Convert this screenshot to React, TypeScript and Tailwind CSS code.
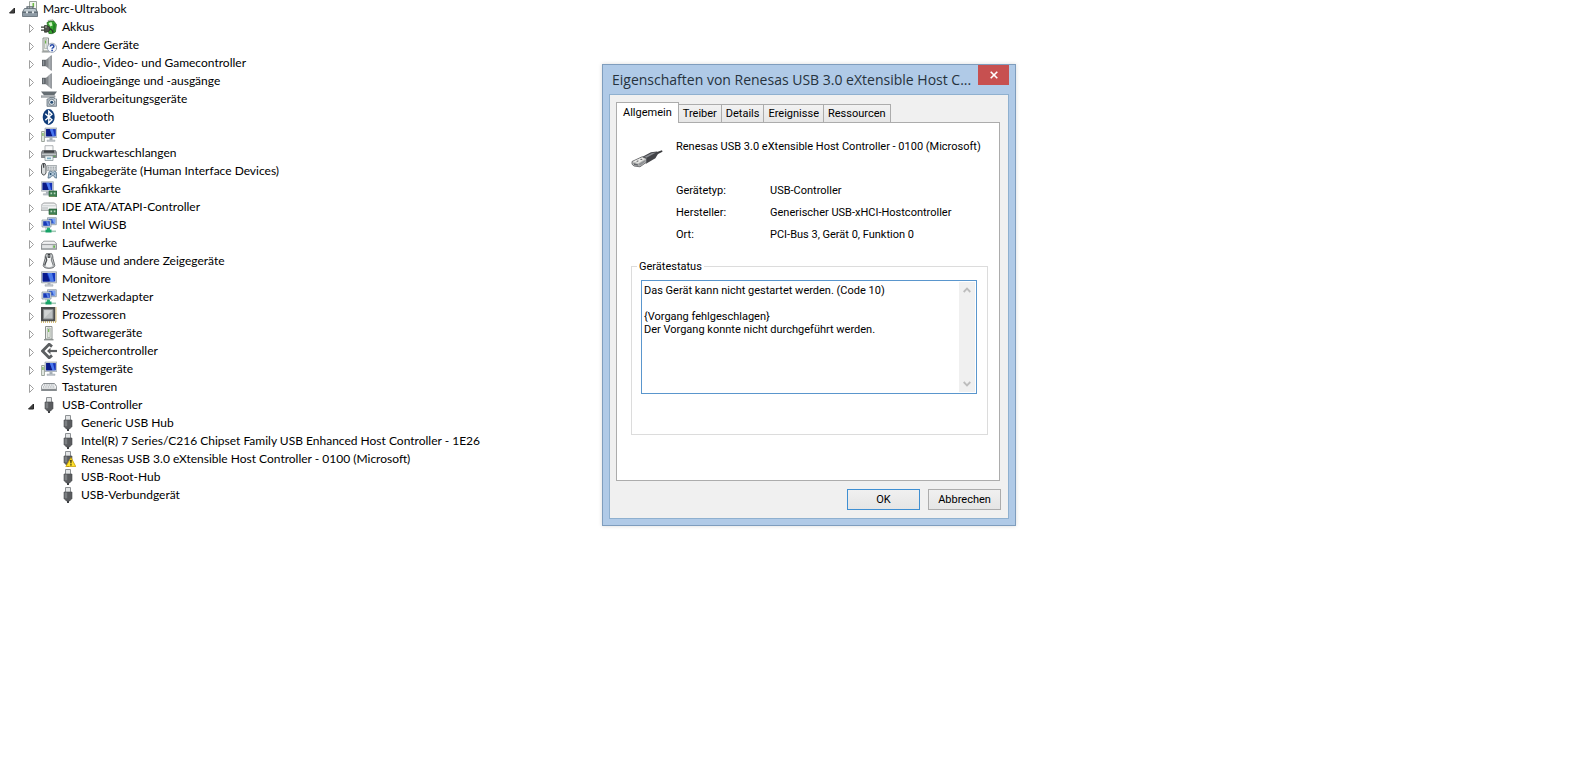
import { useState, type ReactNode } from "react";

type IconName =
  | "toolbox" | "battery" | "unknown" | "speaker" | "camera" | "bluetooth"
  | "computer" | "printer" | "hid" | "graphics" | "ide" | "network" | "drive"
  | "mouse" | "monitor" | "cpu" | "software" | "storage" | "keyboard" | "usb" | "usbWarning";

const screen = (
  <>
    <path d="M4 1h12v9.5H4z" fill="#cfd6dc" stroke="#8d979f" strokeWidth=".6" />
    <path d="M5.2 2.1h9.6v7.2H5.2z" fill="#1533b8" />
    <path d="M5.2 2.1h3.6l2.6 7.2H5.2z" fill="#0a1a86" />
    <path d="M8.8 2.1h3l2 7.2h-2.4z" fill="#4a78ee" />
    <path d="M8.5 10.8h3V13h-3z" fill="#aab2b9" />
    <path d="M6 13h8v1.4H6z" fill="#c4cacf" stroke="#8d979f" strokeWidth=".4" />
  </>
);

const board = (
  <>
    <path d="M8 10h8v5.5H8z" fill="#3f7f52" stroke="#1b5530" strokeWidth=".6" />
    <path d="M9.5 11.5h1.6v1.8H9.5zM12.8 11.5h1.6v1.8h-1.6z" fill="#b9d6bf" />
    <path d="M9 15.3v.7M11 15.3v.7M13 15.3v.7" stroke="#c9b450" strokeWidth=".8" />
  </>
);

const plug = (
  <>
    <path d="M5.5.5h5V6h-5z" fill="#e3e5e6" stroke="#8e9295" />
    <path d="M4 5h8v6.5L9.6 14H6.4L4 11.5z" fill="#5a5c5f" stroke="#484a4d" strokeWidth=".6" />
    <path d="M4.6 5.5h2.6v5.8H4.6z" fill="#7c7f82" />
    <path d="M7 14h2v2H7z" fill="#3e4043" />
  </>
);

const tower = (
  <>
    <path d="M4.5 1.5h6.5V14H4.5z" fill="#f4f6f3" stroke="#8b908d" />
    <path d="M6.3 3h2.9v9.5H6.3z" fill="#dfe5dd" stroke="#9ca59c" strokeWidth=".7" />
    <path d="M7.2 4h1v3h-1z" fill="#66b33f" />
    <path d="M3 14h9.5v1.4H3z" fill="#8d9290" />
  </>
);

const drawings: Record<IconName, ReactNode> = {
  toolbox: (
    <>
      <path d="M7.5.5h7V10h-7z" fill="#f4f7f2" stroke="#9aa29b" />
      <path d="M10.5 2h1.6v4h-1.6z" fill="#6fbb45" />
      <path d="M5 8V5.8h6V8" fill="none" stroke="#59646d" strokeWidth="1.2" />
      <path d="M2.5 7.5h11L15.5 11v4.5h-15V11z" fill="#8e9ba5" stroke="#5d6871" strokeWidth=".8" />
      <path d="M2.8 8h10.4l1.4 2.6H1.4z" fill="#bcc7ce" />
      <path d="M.8 11.2h14.4" stroke="#4f5a63" />
      <path d="M4 10.2h2v2H4zM10 10.2h2v2h-2z" fill="#e6ebee" />
    </>
  ),
  battery: (
    <>
      <path d="M7 1.5 12 .8l1 1.8-5 1z" fill="#dfe5dc" stroke="#767d74" strokeWidth=".5" />
      <path d="M6 3.5q3-2 7-1.2l2.4 3.2-1 7.5q-3 2.5-6.5 1.5z" fill="#35a52e" stroke="#2b6d25" strokeWidth=".8" />
      <path d="M7.5 4 10.5 3l1 3.4-2.2 1z" fill="#d0f5c2" />
      <path d="m12.4 4 1.8 1.5-.8 7-1.4.8z" fill="#1f7f22" />
      <path d="M0 8.2h3.5M0 11.2h3.5" stroke="#343832" strokeWidth="1.2" />
      <path d="M3.5 6.5h2Q9 7 9 9.8t-3.5 3.4h-2z" fill="#4d5349" stroke="#292d27" strokeWidth=".7" />
      <path d="M8.5 10q3 0 3.5 4" fill="none" stroke="#293b28" strokeWidth="1.3" />
      <path d="M4.2 7.3h1.5v1.5H4.2z" fill="#a5aca0" />
    </>
  ),
  unknown: (
    <>
      <path d="M2 1h5.5v13H2z" fill="#f3f5f2" stroke="#8a908b" />
      <path d="M3.5 2.5H6v9H3.5z" fill="#e3e8e1" stroke="#9da59e" strokeWidth=".6" />
      <path d="M4.1 3.5h1v3h-1z" fill="#61ad3c" />
      <path d="M.8 14.3h8v1.2h-8z" fill="#8f9491" />
      <circle cx="11" cy="10.8" r="4.6" fill="#f7f9fd" stroke="#8b98aa" strokeWidth=".8" />
      <path d="M9.3 9.5q.2-1.8 1.8-1.8t1.8 1.5q0 1-1.1 1.6-.7.4-.7 1" fill="none" stroke="#2347a5" strokeWidth="1.5" />
      <circle cx="11.1" cy="13.4" r=".9" fill="#2347a5" />
    </>
  ),
  speaker: (
    <>
      <path d="M1 4.8h4.5v6.4H1z" fill="#565b60" />
      <path d="M1.8 5.5h1.5v5H1.8z" fill="#8f969b" />
      <path d="M4.5 5.2 10.5.3v15.4l-6-4.8z" fill="#85898d" />
      <path d="M7.5 2.8 9.8 1v14l-2.3-1.8z" fill="#a9aeb1" />
      <path d="M10.3.5v15" stroke="#8b9094" />
    </>
  ),
  camera: (
    <>
      <path d="M0 .5h16l-2.8 3.8H3z" fill="#656d72" />
      <path d="M0 4.8h14v1.5H0z" fill="#b9bec1" stroke="#7c8388" strokeWidth=".6" />
      <path d="M6 8h1.5l1.2-1.4h4L14 8h1.6v7.3H6z" fill="#b6c0c8" stroke="#65717b" strokeWidth=".8" />
      <circle cx="10.7" cy="11.3" r="3" fill="#eff3f6" stroke="#596771" strokeWidth=".8" />
      <circle cx="10.7" cy="11.3" r="1.5" fill="#274d73" />
      <path d="M13.5 8.5H15v1h-1.5z" fill="#fff" />
    </>
  ),
  bluetooth: (
    <>
      <ellipse cx="7.7" cy="8" rx="6" ry="7.9" fill="#103c79" />
      <path d="m4.3 4.8 6.6 6-3.1 3V2.2l3.1 3-6.6 6" fill="none" stroke="#fff" strokeWidth="1.4" />
    </>
  ),
  computer: (
    <>
      {screen}
      <path d="M.6 4.5h2.8v10H.6z" fill="#e9eee7" stroke="#879087" strokeWidth=".8" />
      <path d="M1.4 6h1.1v3H1.4z" fill="#64ad3f" />
    </>
  ),
  printer: (
    <>
      <path d="M4 .7h8v6H4z" fill="#fafafa" stroke="#9da2a5" strokeWidth=".8" />
      <path d="M1.5 5.5h13l1.2 2v5H.3v-5z" fill="#85898c" stroke="#5c6064" strokeWidth=".6" />
      <path d="M3 5.5h10v2.2H3z" fill="#404346" />
      <path d="M1 8.6h14v1.4H1z" fill="#c0c4c6" />
      <path d="M4 10.8h8v4.7H4z" fill="#edf4f6" stroke="#7e898e" strokeWidth=".7" />
      <path d="M6 12.5h4v1.7H6z" fill="#7cacc1" />
      <path d="M12.5 10.8h1.8v1h-1.8z" fill="#58b549" />
    </>
  ),
  hid: (
    <>
      <path d="M1.5.5H4L5 3v7l-1.5 2H2L.5 10V3z" fill="#d9dcdd" stroke="#45494c" strokeWidth=".9" />
      <path d="M2.7.8v4" stroke="#333739" strokeWidth="1.2" />
      <path d="M6 2.5h9.7v5.2H6z" fill="#e4e7e9" stroke="#8b9296" strokeWidth=".7" />
      <path d="M7 4.2h8M7 6h8" stroke="#7f888e" strokeDasharray="1 .7" />
      <path d="M8 9q2-1.6 3 0h1.4q1.3-1.6 2.7 0l.8 6-2-.3-1.2-2h-1.8l-1.7 2-2.2.4z" fill="#b4c8d8" stroke="#4d6a80" strokeWidth=".8" />
      <path d="M8.6 11h2M9.6 10v2M12.8 11h1.3" stroke="#29506f" />
    </>
  ),
  graphics: (
    <>
      <g transform="translate(-3.6 -.3)">{screen}</g>
      {board}
    </>
  ),
  ide: (
    <>
      <path d="M2.5 4h11L16 6.5v4.8H0V6.5z" fill="#f2f3f4" stroke="#85898c" strokeWidth=".8" />
      <path d="M.5 6.8h15" stroke="#b5babd" strokeWidth=".7" />
      <path d="M1 8h6v2.8H1z" fill="#d0d3d5" />
      {board}
    </>
  ),
  network: (
    <>
      <path d="M6.5.7h8.8v7H6.5z" fill="#d3dce5" stroke="#7d8b98" strokeWidth=".7" />
      <path d="M7.6 1.8h6.6v4.8H7.6z" fill="#315bd0" />
      <path d="M11 1.8h3.2v4.8h-1.3z" fill="#7ba4f4" />
      <path d="M1 3h9v7H1z" fill="#d8e0e7" stroke="#7b8995" strokeWidth=".7" />
      <path d="M2.2 4.2h6.6v4.6H2.2z" fill="#1739b7" />
      <path d="M5 4.2h2.2l1.2 4.6H6.7z" fill="#5b83e8" />
      <path d="M4 10.3h4v1.2H4z" fill="#a4b0ba" />
      <path d="M6 10.7h3v2.5H6z" fill="#27b174" />
      <path d="M0 13.5h15v1.6H0z" fill="#9fc9b4" />
      <path d="M4.5 12.5h6v3h-6z" fill="#16a367" />
    </>
  ),
  drive: (
    <>
      <path d="M2.8 6.2h10.4L16 9.2v5H0v-5z" fill="#f2f3f4" stroke="#85898c" strokeWidth=".8" />
      <path d="M.5 9.4h15v4.5H.5z" fill="#c9cccd" stroke="#7a8083" strokeWidth=".7" />
      <path d="M1.3 10.2h10v2.8h-10z" fill="#e2e4e5" />
      <path d="M12.4 10.5h1.4v2.3h-1.4z" fill="#4eaf2d" />
    </>
  ),
  mouse: (
    <>
      <path d="M5.3.7h5.4q1.3 1.5 1.3 5l1.8 6.8q-.5 2.8-5.8 2.8t-5.8-2.8L4 5.7Q4 2.2 5.3.7z" fill="#c5c8ca" stroke="#4b4f52" strokeWidth=".8" />
      <path d="M6.4 4.5h3.2l2 7.5q-.5 2.2-3.6 2.2T4.4 12z" fill="#f6f7f7" />
      <path d="M4.6 3.5 5.8 7 3.6 12.5" fill="none" stroke="#4b4f52" strokeWidth="1.2" />
      <path d="m11.4 3.5-1.2 3.5 2.2 5.5" fill="none" stroke="#7b7f82" />
      <path d="M6.8 1h2.4v3.8H6.8z" fill="#35383b" />
      <path d="M7.5 2h1v1.7h-1z" fill="#b9bdc0" />
    </>
  ),
  monitor: (
    <>
      <path d="M.5.8h15v11H.5z" fill="#d6dbe0" stroke="#929ba3" strokeWidth=".8" />
      <path d="M1.7 2h12.6v8.5H1.7z" fill="#1237c1" />
      <path d="M1.7 2h4l3 8.5h-7z" fill="#091a8d" />
      <path d="M6.7 2H11l2 8.5H9.5z" fill="#4b7bea" />
      <path d="M6.5 12h3v1.7h-3z" fill="#a8b0b8" />
      <path d="M4 13.7h8v1.5H4z" fill="#cbd0d5" stroke="#949ca4" strokeWidth=".5" />
    </>
  ),
  cpu: (
    <>
      <path d="M0 15h15.5M15 .5V15" stroke="#c7ab50" strokeWidth="1.6" strokeDasharray="1 1" />
      <path d="M0 0h14.2v14.2H0z" fill="#4b4d4e" />
      <path d="M2.5 2.5h9.5V12H2.5z" fill="#bcc0c1" stroke="#85898a" />
      <path d="M3.3 3.3h7.8l-7.8 7.8z" fill="#d0d3d3" />
    </>
  ),
  software: tower,
  storage: (
    <>
      <path d="M11 3.6 8.2 1.2 1.5 8l6.7 6.8 2.8-2.4" fill="none" stroke="#5c5f61" strokeWidth="2.8" />
      <path d="M9 8h7" stroke="#5c5f61" strokeWidth="2.2" />
      <path d="M6 8 9.5 4.8v6.4z" fill="#5c5f61" />
    </>
  ),
  keyboard: (
    <>
      <path d="M2.5 4.5h11L15.7 7.5v4H.3v-4z" fill="#f1f2f3" stroke="#7b8083" strokeWidth=".9" />
      <path d="M3 6h10M2 8h12" stroke="#959ca0" strokeWidth="1.1" strokeDasharray="1 .7" />
      <path d="M.8 9.8h14.4v1.5H.8z" fill="#85898c" />
    </>
  ),
  usb: plug,
  usbWarning: (
    <>
      {plug}
      <path d="M11 6.6 15.8 15.6H5.8z" fill="#ffe32f" stroke="#c59b00" strokeWidth=".8" strokeLinejoin="round" />
      <path d="M10.2 9h1.5l-.3 3.6h-.9zM10.3 13.3h1.3v1.3h-1.3z" fill="#1f1c08" />
    </>
  ),
};

function Icon({ name }: { name: IconName }) {
  return (
    <svg viewBox="0 0 16 16" className="size-4 shrink-0" aria-hidden="true">
      {drawings[name]}
    </svg>
  );
}

const categories: { label: string; icon: IconName }[] = [
  { label: "Akkus", icon: "battery" },
  { label: "Andere Geräte", icon: "unknown" },
  { label: "Audio-, Video- und Gamecontroller", icon: "speaker" },
  { label: "Audioeingänge und -ausgänge", icon: "speaker" },
  { label: "Bildverarbeitungsgeräte", icon: "camera" },
  { label: "Bluetooth", icon: "bluetooth" },
  { label: "Computer", icon: "computer" },
  { label: "Druckwarteschlangen", icon: "printer" },
  { label: "Eingabegeräte (Human Interface Devices)", icon: "hid" },
  { label: "Grafikkarte", icon: "graphics" },
  { label: "IDE ATA/ATAPI-Controller", icon: "ide" },
  { label: "Intel WiUSB", icon: "network" },
  { label: "Laufwerke", icon: "drive" },
  { label: "Mäuse und andere Zeigegeräte", icon: "mouse" },
  { label: "Monitore", icon: "monitor" },
  { label: "Netzwerkadapter", icon: "network" },
  { label: "Prozessoren", icon: "cpu" },
  { label: "Softwaregeräte", icon: "software" },
  { label: "Speichercontroller", icon: "storage" },
  { label: "Systemgeräte", icon: "computer" },
  { label: "Tastaturen", icon: "keyboard" },
];

const usbDevices: { label: string; icon: IconName }[] = [
  { label: "Generic USB Hub", icon: "usb" },
  { label: "Intel(R) 7 Series/C216 Chipset Family USB Enhanced Host Controller - 1E26", icon: "usb" },
  { label: "Renesas USB 3.0 eXtensible Host Controller - 0100 (Microsoft)", icon: "usbWarning" },
  { label: "USB-Root-Hub", icon: "usb" },
  { label: "USB-Verbundgerät", icon: "usb" },
];

function TreeRow({ label, icon, open }: { label: string; icon: IconName; open?: boolean }) {
  return (
    <div className="flex h-[18px] items-center whitespace-nowrap">
      {open === undefined ? null : (
        <button type="button" aria-label={label} aria-expanded={open} className="mr-1 h-4 w-3 shrink-0">
          <svg viewBox="0 0 12 16" className="h-4 w-3" aria-hidden="true">
            {open ? (
              <path d="M8.5 7v5h-5z" fill="#404040" stroke="#262626" />
            ) : (
              <path d="M4.5 5.5v8l4-4z" fill="#fff" stroke="#a0a0a0" />
            )}
          </svg>
        </button>
      )}
      <Icon name={icon} />
      <span className="pl-[5px]">{label}</span>
    </div>
  );
}

const tabs = ["Allgemein", "Treiber", "Details", "Ereignisse", "Ressourcen"];

const details = [
  ["Gerätetyp:", "USB-Controller"],
  ["Hersteller:", "Generischer USB-xHCI-Hostcontroller"],
  ["Ort:", "PCI-Bus 3, Gerät 0, Funktion 0"],
];

const statusText =
  "Das Gerät kann nicht gestartet werden. (Code 10)\n\n{Vorgang fehlgeschlagen}\nDer Vorgang konnte nicht durchgeführt werden.";

function PropertiesDialog() {
  const [active, setActive] = useState("Allgemein");
  return (
    <section
      role="dialog"
      aria-labelledby="dialog-title"
      className="absolute top-16 left-[602px] w-[414px] border border-[#7f9dbd] bg-[#b0cae7] px-[6px] pb-[6px] font-[Roboto,sans-serif] text-[11px] leading-[13px] shadow-[0_0_4px_rgba(0,0,0,0.15)]"
    >
      <header className="flex h-[29px] items-start justify-between pl-[3px]">
        <h1 id="dialog-title" className="pt-1 font-['Open_Sans',sans-serif] text-sm leading-[22px] whitespace-nowrap text-[#26323d]">
          Eigenschaften von Renesas USB 3.0 eXtensible Host C...
        </h1>
        <button type="button" aria-label="Schließen" className="flex h-5 w-[31px] shrink-0 items-center justify-center bg-[#c75050]">
          <svg viewBox="0 0 8 8" className="size-2" aria-hidden="true">
            <path d="m.7.7 6.6 6.6M7.3.7.7 7.3" stroke="#fff" strokeWidth="1.6" />
          </svg>
        </button>
      </header>

      <div className="border border-[#8fb0cf] bg-[#f0f0f0] pt-[7px] pr-[7px] pb-2 pl-[6px]">
        <div role="tablist" className="flex items-end">
          {tabs.map((tab) => (
            <button
              key={tab}
              type="button"
              role="tab"
              aria-selected={tab === active}
              onClick={() => setActive(tab)}
              className={
                tab === active
                  ? "relative z-10 -mb-px h-[21px] border border-b-0 border-[#acacac] bg-white px-[6px] pb-[2px]"
                  : "h-[18px] border border-b-0 border-l-0 border-[#acacac] bg-linear-to-b from-[#f2f2f2] to-[#e6e6e6] px-1"
              }
            >
              {tab}
            </button>
          ))}
        </div>

        <div role="tabpanel" className="mr-px h-[359px] border border-[#acacac] bg-white pt-[17px] pr-[11px] pl-[14px]">
          <div className="flex gap-[13px]">
            <svg viewBox="0 0 32 20" className="mt-[9px] h-5 w-8 shrink-0" aria-hidden="true">
              <path d="m23 4 8-2.8.5 1.5L25 6z" fill="#3c3d3f" />
              <path d="M11.5 7.8 20 3.2l6-.7 1.2 2-2.8 4.7-9.4 5.6z" fill="#434448" />
              <path d="m13 8 8-4 4-.4-9.5 5.2z" fill="#898b90" />
              <path d="m1 12.5 10.3-4.8 4.2 1.8v3.7L9 17.8l-6-.8-2-1.8z" fill="#bfc0bf" stroke="#55575a" strokeWidth=".8" />
              <path d="m2 12.6 9-4 3 1.3-6.5 4.2z" fill="#e9e9e7" />
              <path d="m5.2 12.3 1.7-.8 1 .4-1.7.9zM9 10.5l1.5-.7 1.2.5-1.7.8z" fill="#4e5053" />
              <path d="m2.4 14 5 1.5v1.3l-4.3-.8z" fill="#62656a" />
              <path d="m7.7 14.8 7-4v1.6L8.8 17z" fill="#8e9093" />
            </svg>
            <p className="h-11 whitespace-nowrap">Renesas USB 3.0 eXtensible Host Controller - 0100 (Microsoft)</p>
          </div>
          <dl className="grid grid-cols-[94px_1fr] gap-y-[9px] pl-[45px]">
            {details.map(([name, value]) => (
              <div key={name} className="contents">
                <dt>{name}</dt>
                <dd>{value}</dd>
              </div>
            ))}
          </dl>

          <fieldset className="mt-[19px] h-[175px] border border-[#dcdcdc] pr-[10px] pl-[9px]">
            <legend className="-ml-1 px-[2px]">
              <label htmlFor="device-status">Gerätestatus</label>
            </legend>
            <div className="mt-[7px] flex h-[114px] border border-[#5a96cd] bg-white p-px">
              <textarea
                id="device-status"
                readOnly
                defaultValue={statusText}
                className="min-w-0 flex-1 resize-none overflow-hidden bg-white pt-[2px] pl-px outline-none"
              />
              <div className="flex w-4 flex-col justify-between bg-[#f0f0f0]">
                <button type="button" aria-label="Nach oben" className="flex h-4 items-center justify-center">
                  <svg viewBox="0 0 8 6" className="h-[6px] w-2" aria-hidden="true">
                    <path d="m.7 5 3.3-3.4L7.3 5" fill="none" stroke="#bdbdbd" strokeWidth="1.8" />
                  </svg>
                </button>
                <button type="button" aria-label="Nach unten" className="flex h-4 items-center justify-center">
                  <svg viewBox="0 0 8 6" className="h-[6px] w-2" aria-hidden="true">
                    <path d="m.7 1 3.3 3.4L7.3 1" fill="none" stroke="#bdbdbd" strokeWidth="1.8" />
                  </svg>
                </button>
              </div>
            </div>
          </fieldset>
        </div>

        <footer className="flex justify-end gap-2 pt-2">
          <button type="button" className="h-[21px] w-[73px] border border-[#3f8fd2] bg-linear-to-b from-[#f0f0f0] to-[#e5e5e5]">
            OK
          </button>
          <button type="button" className="h-[21px] w-[73px] border border-[#acacac] bg-linear-to-b from-[#f0f0f0] to-[#e5e5e5]">
            Abbrechen
          </button>
        </footer>
      </div>
    </section>
  );
}

export default function App() {
  return (
    <main className="relative min-h-screen bg-white text-black">
      <nav aria-label="Geräte-Manager" className="pl-[6px] font-[Lato,sans-serif] text-xs leading-[18px]">
        <TreeRow label="Marc-Ultrabook" icon="toolbox" open />
        <ul className="pl-[19px]">
          {categories.map((item) => (
            <li key={item.label}>
              <TreeRow label={item.label} icon={item.icon} open={false} />
            </li>
          ))}
          <li>
            <TreeRow label="USB-Controller" icon="usb" open />
            <ul className="pl-[35px]">
              {usbDevices.map((item) => (
                <li key={item.label}>
                  <TreeRow label={item.label} icon={item.icon} />
                </li>
              ))}
            </ul>
          </li>
        </ul>
      </nav>
      <PropertiesDialog />
    </main>
  );
}
